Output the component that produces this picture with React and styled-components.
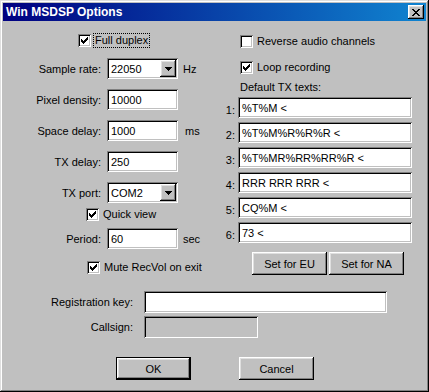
import React from 'react';
import styled, { createGlobalStyle } from 'styled-components';

const GlobalStyle = createGlobalStyle`
  body {
    margin: 0;
    background: #c0c0c0;
    font-family: "Liberation Sans", Arial, sans-serif;
    font-size: 11px;
    color: #000;
  }
`;

const raised = `
  box-shadow: inset -1px -1px #000, inset 1px 1px #fff,
    inset -2px -2px #808080, inset 2px 2px #dfdfdf;
`;

const sunken = `
  box-shadow: inset 1px 1px #808080, inset -1px -1px #fff,
    inset 2px 2px #000, inset -2px -2px #c0c0c0;
`;

const Window = styled.div`
  width: 429px;
  height: 392px;
  box-sizing: border-box;
  padding: 3px;
  background: #c0c0c0;
  box-shadow: inset -1px -1px #000, inset 1px 1px #dfdfdf,
    inset -2px -2px #808080, inset 2px 2px #fff;
  display: flex;
  flex-direction: column;
`;

const TitleBar = styled.div`
  height: 18px;
  display: flex;
  align-items: center;
  padding: 0 2px 0 3px;
  background: linear-gradient(to right, #000080, #1084d0);
  color: #fff;
  font-weight: bold;
  font-size: 12px;
`;

const CloseButton = styled.div`
  margin-left: auto;
  width: 16px;
  height: 14px;
  background: #c0c0c0;
  ${raised}
  display: flex;
  align-items: center;
  justify-content: center;
`;

const Body = styled.div`
  display: flex;
`;

const Column = styled.div`
  width: ${p => p.$width}px;
  display: flex;
  flex-direction: column;
`;

const CheckRow = styled.div`
  display: flex;
  align-items: center;
  height: 15px;
  margin-top: ${p => p.$top}px;
  padding-left: ${p => p.$indent}px;
`;

const Box = styled.div`
  width: 13px;
  height: 13px;
  flex: none;
  background: #fff;
  ${sunken}
  margin-right: 2px;
  display: flex;
`;

const CheckLabel = styled.span`
  padding: 0 1px;
  line-height: 13px;
  border: 1px dotted ${p => (p.$focus ? '#000' : 'transparent')};
  white-space: nowrap;
`;

const FieldRow = styled.div`
  display: flex;
  align-items: center;
  height: ${p => p.$height || 21}px;
  margin-top: ${p => p.$top}px;
`;

const FieldLabel = styled.span`
  width: ${p => p.$width}px;
  margin-right: ${p => p.$gap}px;
  text-align: right;
  white-space: nowrap;
  flex: none;
`;

const Field = styled.div`
  width: ${p => p.$width}px;
  height: 100%;
  box-sizing: border-box;
  flex: none;
  background: ${p => (p.$disabled ? '#c0c0c0' : '#fff')};
  ${sunken}
  padding: 2px 2px 2px 4px;
  display: flex;
  align-items: center;
  white-space: nowrap;
`;

const DropButton = styled.div`
  margin-left: auto;
  width: 16px;
  height: 17px;
  background: #c0c0c0;
  ${raised}
  display: flex;
  align-items: center;
  justify-content: center;
`;

const Suffix = styled.span`
  margin-left: ${p => p.$gap || 5}px;
`;

const Caption = styled.div`
  margin-top: 6px;
  padding-left: 20px;
  line-height: 13px;
`;

const TxRow = styled.div`
  display: flex;
  align-items: center;
  height: 21px;
  margin-top: ${p => p.$top}px;
`;

const TxNum = styled.span`
  width: 15px;
  margin-right: 3px;
  padding-top: 4px;
  text-align: right;
`;

const ButtonRow = styled.div`
  display: flex;
  gap: ${p => p.$gap}px;
  margin-top: ${p => p.$top}px;
  padding-left: ${p => p.$indent}px;
`;

const Button = styled.div`
  width: 75px;
  height: 23px;
  box-sizing: border-box;
  background: #c0c0c0;
  display: flex;
  align-items: center;
  justify-content: center;
  ${p =>
    p.$default
      ? `box-shadow: inset 0 0 0 1px #000, inset -2px -2px #000, inset 2px 2px #fff,
          inset -3px -3px #808080, inset 3px 3px #dfdfdf;`
      : raised}
`;

const Bottom = styled.div`
  display: flex;
  flex-direction: column;
`;

const Check = () => (
  <svg width="13" height="13" shapeRendering="crispEdges">
    {[2, 3, 4, 3, 2, 1, 0].map((y, i) => (
      <rect key={i} x={3 + i} y={3 + y} width="1" height="3" fill="#000" />
    ))}
  </svg>
);

const Arrow = () => (
  <svg width="7" height="4" shapeRendering="crispEdges">
    <path d="M0 0h7v1H0zM1 1h5v1H1zM2 2h3v1H2zM3 3h1v1H3z" fill="#000" />
  </svg>
);

const CloseX = () => (
  <svg width="8" height="7" shapeRendering="crispEdges">
    <path
      d="M0 0h2v1H0zM6 0h2v1H6zM1 1h2v1H1zM5 1h2v1H5zM2 2h4v1H2zM3 3h2v1H3zM2 4h4v1H2zM1 5h2v1H1zM5 5h2v1H5zM0 6h2v1H0zM6 6h2v1H6z"
      fill="#000"
    />
  </svg>
);

const CheckItem = ({ top, indent, checked, focus, children }) => (
  <CheckRow $top={top} $indent={indent}>
    <Box>{checked && <Check />}</Box>
    <CheckLabel $focus={focus}>{children}</CheckLabel>
  </CheckRow>
);

const LeftField = ({ label, value, suffix, combo, gap }) => (
  <FieldRow $top={10}>
    <FieldLabel $width={98} $gap={6}>{label}</FieldLabel>
    <Field $width={71}>
      {value}
      {combo && (
        <DropButton>
          <Arrow />
        </DropButton>
      )}
    </Field>
    {suffix && <Suffix $gap={gap}>{suffix}</Suffix>}
  </FieldRow>
);

const txTexts = ['%T%M <', '%T%M%R%R%R <', '%T%MR%RR%RR%R <', 'RRR RRR RRR <', 'CQ%M <', '73 <'];

export default function App() {
  return (
    <>
      <GlobalStyle />
      <Window>
        <TitleBar>
          Win MSDSP Options
          <CloseButton>
            <CloseX />
          </CloseButton>
        </TitleBar>
        <Body>
          <Column $width={217}>
            <CheckItem top={12} indent={75} checked focus>Full duplex</CheckItem>
            <LeftField label="Sample rate:" value="22050" suffix="Hz" combo />
            <LeftField label="Pixel density:" value="10000" />
            <LeftField label="Space delay:" value="1000" suffix="ms" gap={7} />
            <LeftField label="TX delay:" value="250" />
            <LeftField label="TX port:" value="COM2" combo />
            <CheckItem top={4} indent={83} checked>Quick view</CheckItem>
            <FieldRow $top={6}>
              <FieldLabel $width={98} $gap={6}>Period:</FieldLabel>
              <Field $width={71}>60</Field>
              <Suffix>sec</Suffix>
            </FieldRow>
            <CheckItem top={11} indent={84} checked>Mute RecVol on exit</CheckItem>
          </Column>
          <Column $width={206}>
            <CheckItem top={13} indent={20}>Reverse audio channels</CheckItem>
            <CheckItem top={11} indent={20} checked>Loop recording</CheckItem>
            <Caption>Default TX texts:</Caption>
            {txTexts.map((t, i) => (
              <TxRow key={i} $top={i === 0 ? 3 : 4}>
                <TxNum>{i + 1}:</TxNum>
                <Field $width={174}>{t}</Field>
              </TxRow>
            ))}
            <ButtonRow $top={9} $indent={32} $gap={2}>
              <Button>Set for EU</Button>
              <Button>Set for NA</Button>
            </ButtonRow>
          </Column>
        </Body>
        <Bottom>
          <FieldRow $top={16} $height={22}>
            <FieldLabel $width={130} $gap={11}>Registration key:</FieldLabel>
            <Field $width={243} />
          </FieldRow>
          <FieldRow $top={3} $height={22}>
            <FieldLabel $width={130} $gap={11}>Callsign:</FieldLabel>
            <Field $width={114} $disabled />
          </FieldRow>
          <ButtonRow $top={19} $indent={113} $gap={48}>
            <Button $default>OK</Button>
            <Button>Cancel</Button>
          </ButtonRow>
        </Bottom>
      </Window>
    </>
  );
}
